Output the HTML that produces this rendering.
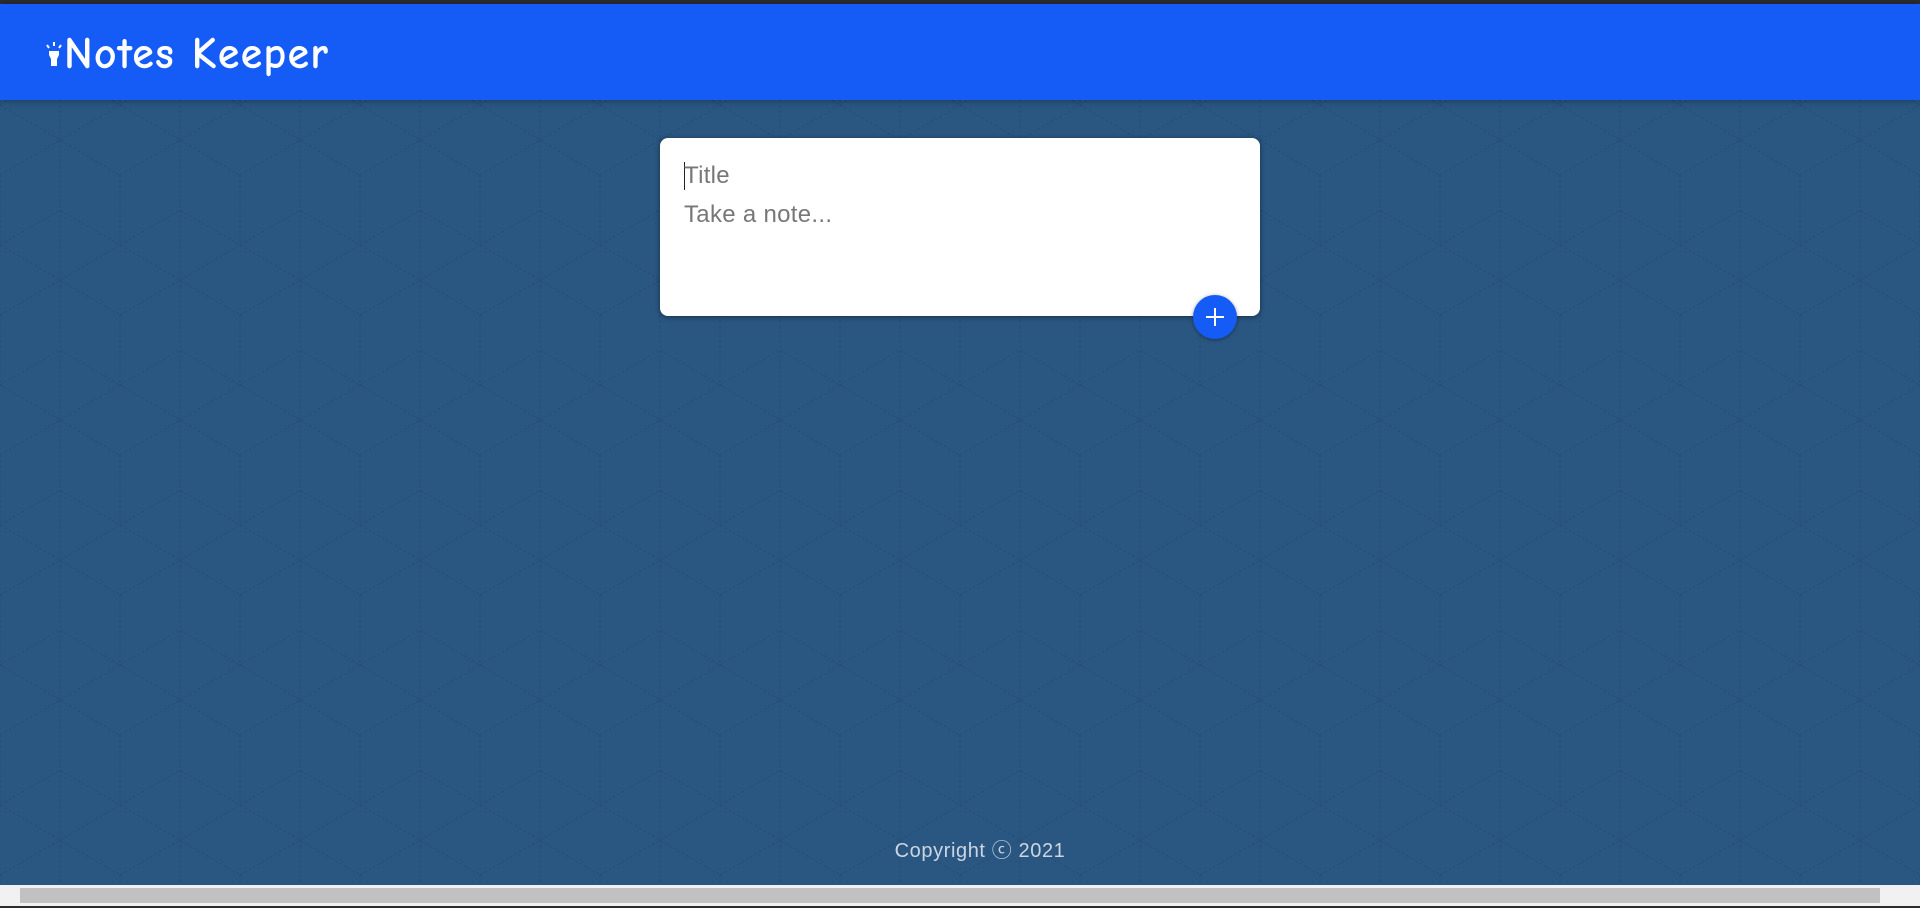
<!DOCTYPE html>
<html><head><meta charset="utf-8"><style>
html,body{margin:0;padding:0;width:1920px;height:908px;overflow:hidden;}
body{background:#2a5782;font-family:"Liberation Sans",sans-serif;position:relative;}
.pat{position:absolute;left:0;top:0;width:1920px;height:908px;}
.topbar{position:absolute;left:0;top:0;width:1920px;height:4px;background:#2d2f33;}
header{position:absolute;left:0;top:4px;width:1920px;height:96px;background:#155cf6;box-shadow:0 0 8px rgba(0,0,0,.4);}
header h1{margin:0;position:absolute;left:44px;top:24px;color:#fff;font-family:"Comic Sans MS","Comic Neue","DejaVu Sans",sans-serif;font-weight:bold;font-size:44px;letter-spacing:1.2px;}
.card{position:absolute;left:660px;top:138px;width:600px;height:178px;background:#fff;border-radius:8px;box-shadow:0 1px 6px rgba(0,0,0,.45);}
.t1{position:absolute;left:24px;top:24px;font-size:24px;color:#777;letter-spacing:0.3px;}
.t2{position:absolute;left:24px;top:63px;font-size:24px;color:#777;letter-spacing:0.3px;}
.caret{position:absolute;left:24px;top:24px;width:1px;height:28px;background:#222;}
.btn{position:absolute;left:1193px;top:295px;width:44px;height:44px;border-radius:50%;background:#155cf6;box-shadow:0 1px 4px rgba(0,0,0,.4);}
.btn:before{content:"";position:absolute;left:13px;top:21px;width:18px;height:2px;background:#fff;}
.btn:after{content:"";position:absolute;left:21px;top:13px;width:2px;height:18px;background:#fff;}
footer{position:absolute;left:20px;width:1920px;top:834px;text-align:center;color:#ccd6e2;font-size:20px;letter-spacing:0.6px;}
.sb{position:absolute;left:0;top:885px;width:1920px;height:21px;background:#f1f1f1;}
.thumb{position:absolute;left:20px;top:3px;width:1860px;height:15px;background:#c1c1c1;}
.bot{position:absolute;left:0;top:906px;width:1920px;height:2px;background:#2b2b2b;}
</style></head><body>
<svg class="pat" width="1920" height="908"><defs><pattern id="h" width="120" height="140" patternUnits="userSpaceOnUse">
<path d="M0 35 L60 0 L120 35 M0 105 L60 140 L120 105 M60 0 V140 M0 35 V105 M120 35 V105 M0 105 L60 70 L120 105" stroke="#244d74" stroke-width="1" fill="none" stroke-dasharray="3 2"/></pattern></defs>
<rect y="100" width="1920" height="808" fill="url(#h)"/></svg>
<div class="topbar"></div>
<header><h1>
<svg width="20" height="30" viewBox="0 0 20 30" style="vertical-align:-2px"><path d="M5 11 h10 v4 l-2 4 v7 h-6 v-7 l-2 -4z" fill="#fff"/><path d="M10 2v4M3 5l2 3M17 5l-2 3" stroke="#fff" stroke-width="2"/></svg>Notes Keeper</h1></header>
<div class="card"><div class="caret"></div><div class="t1">Title</div><div class="t2">Take a note...</div></div>
<div class="btn"></div>
<footer>Copyright ⓒ 2021</footer>
<div class="sb"><div class="thumb"></div></div>
<div class="bot"></div>
</body></html>
